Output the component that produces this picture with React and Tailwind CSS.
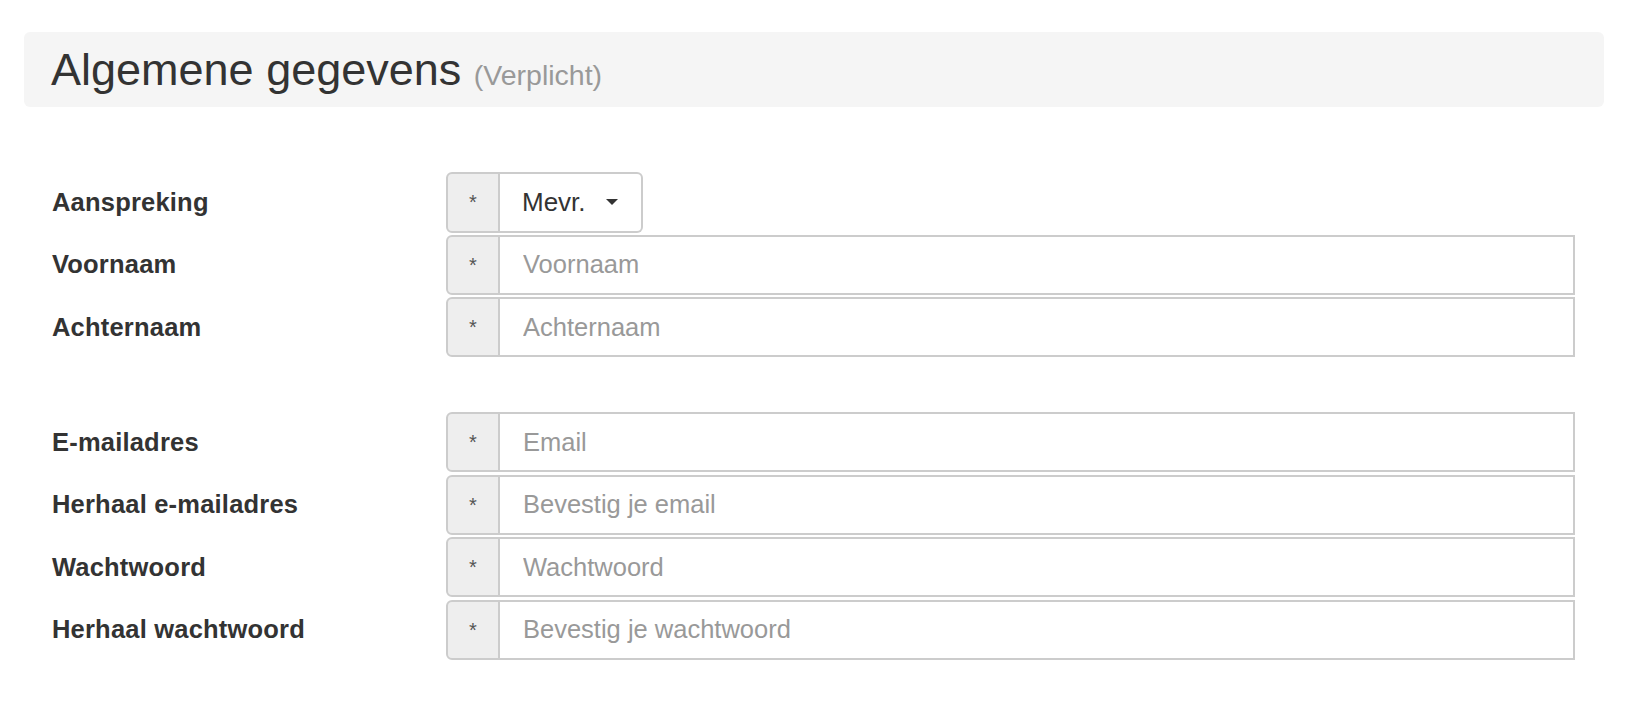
import React from 'react'

const groups = [
  [
    { label: 'Voornaam', placeholder: 'Voornaam' },
    { label: 'Achternaam', placeholder: 'Achternaam' },
  ],
  [
    { label: 'E-mailadres', placeholder: 'Email' },
    { label: 'Herhaal e-mailadres', placeholder: 'Bevestig je email' },
    { label: 'Wachtwoord', placeholder: 'Wachtwoord', type: 'password' },
    { label: 'Herhaal wachtwoord', placeholder: 'Bevestig je wachtwoord', type: 'password' },
  ],
]

const Addon = () => (
  <span className="flex w-[54px] shrink-0 items-center justify-center rounded-l-md border-2 border-[#cccccc] bg-[#eeeeee] text-[20px] text-[#555555]">
    *
  </span>
)

const Row = ({ label, children }) => (
  <div className="flex h-[60px] items-center">
    <label className="w-[422px] shrink-0 pl-[28px] text-[25.5px] font-bold tracking-[0.2px] text-[#333333]">{label}</label>
    {children}
  </div>
)

const Field = ({ f }) => (
  <Row label={f.label}>
    <div className="flex h-full w-[1129px]">
      <Addon />
      <input
        type={f.type || 'text'}
        placeholder={f.placeholder}
        className="flex-1 border-2 border-l-0 border-[#cccccc] bg-white px-[23px] text-[25.5px] text-[#333333] outline-none placeholder:text-[#999999]"
      />
    </div>
  </Row>
)

const App = () => {
  return (
    <div className="min-h-screen bg-white px-6 pt-8 font-['Liberation_Sans',Arial,sans-serif]">
      <div className="flex h-[75px] items-center rounded-md bg-[#f5f5f5] pl-[27px]">
        <h1 className="text-[45px] leading-none text-[#333333]">
          Algemene gegevens <small className="text-[28.5px] text-[#999999]">(Verplicht)</small>
        </h1>
      </div>

      <form className="mt-[65px] flex flex-col">
        <div className="flex flex-col gap-[2.5px]">
          <Row label="Aanspreking">
            <div className="flex h-[61px]">
              <Addon />
              <button
                type="button"
                className="flex items-center gap-[20px] rounded-r-md border-2 border-l-0 border-[#cccccc] bg-white pl-[22px] pr-[23px] text-[26px] text-[#333333]"
              >
                Mevr.
                <span className="h-0 w-0 border-x-[6px] border-t-[6px] border-x-transparent border-t-[#333333]" />
              </button>
            </div>
          </Row>
          {groups[0].map((f) => (
            <Field key={f.label} f={f} />
          ))}
        </div>

        <div className="mt-[55px] flex flex-col gap-[2.5px]">
          {groups[1].map((f) => (
            <Field key={f.label} f={f} />
          ))}
        </div>
      </form>
    </div>
  )
}

export default App
